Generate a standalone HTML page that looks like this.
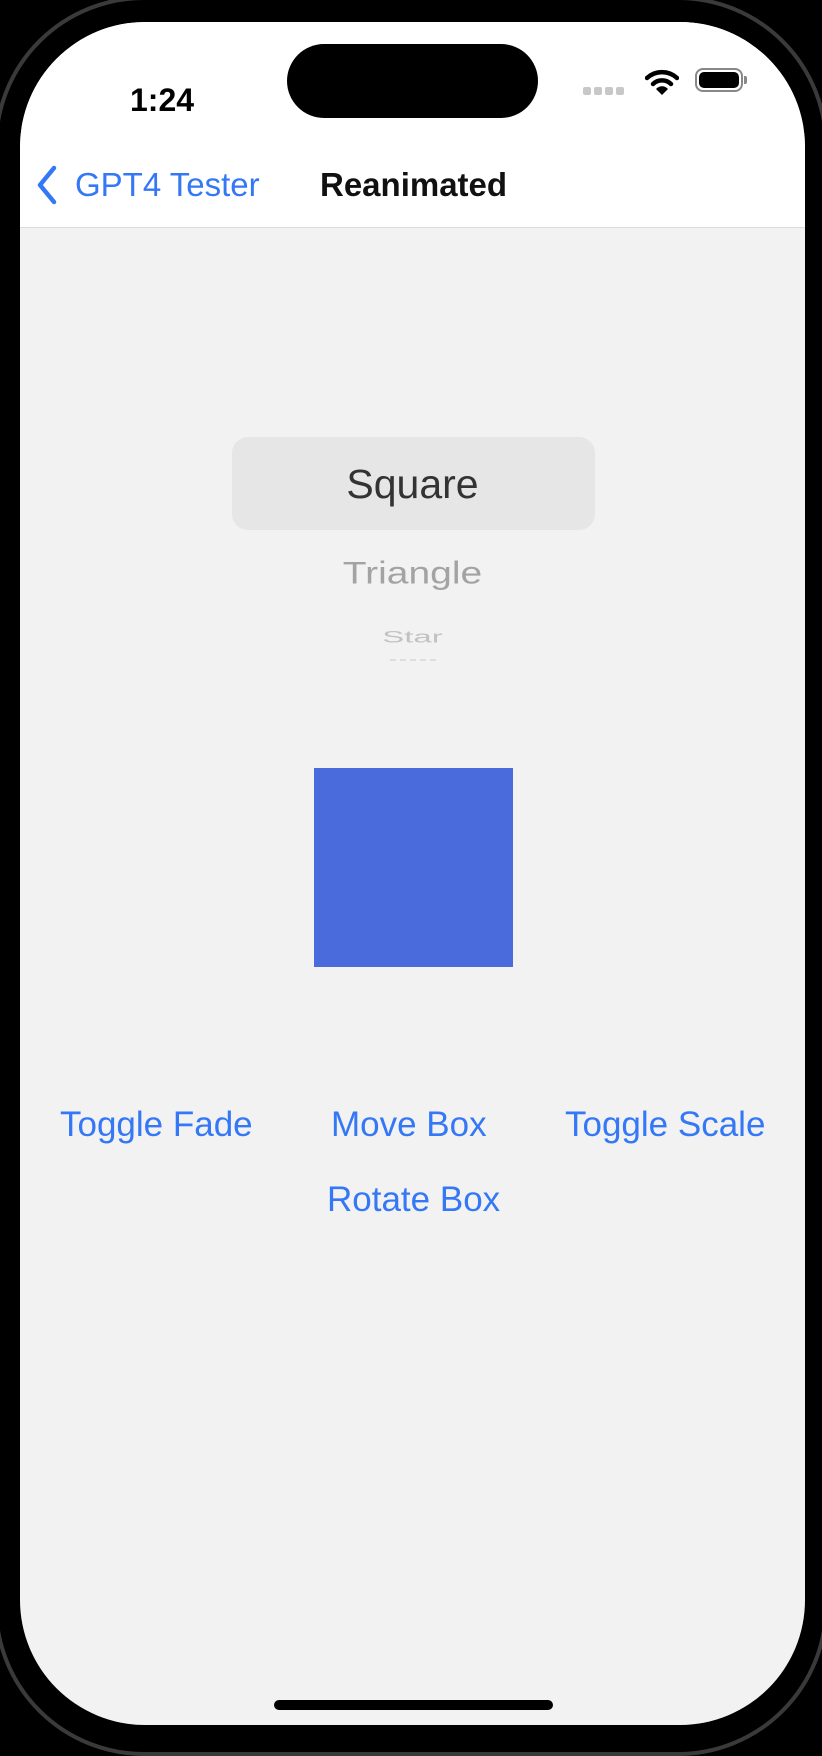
<!DOCTYPE html>
<html><head><meta charset="utf-8"><style>
*{margin:0;padding:0;box-sizing:border-box}
html,body{width:822px;height:1736px;background:#000;overflow:hidden;font-family:"Liberation Sans",sans-serif}
.bezel{position:absolute;left:-6px;top:-4px;width:834px;height:1760px;border-radius:150px;border:4px solid #3a3a3a}
.screen{position:absolute;left:20px;top:22px;width:785px;height:1703px;background:#f2f2f2;border-radius:125px;overflow:hidden}
.t{position:absolute;white-space:nowrap;line-height:1}
</style></head><body>
<div class="bezel"></div>
<div class="screen">
  <div style="position:absolute;left:0;top:0;width:785px;height:206px;background:#fff;border-bottom:1px solid #dcdcdc"></div>
  <div style="position:absolute;left:267px;top:22px;width:251px;height:74px;background:#000;border-radius:37px"></div>
  <div class="t" style="left:110px;top:62px;font-size:32px;font-weight:bold;color:#000">1:24</div>
  <div style="position:absolute;left:563px;top:65px;width:8px;height:8px;border-radius:2px;background:#c8c8c8;box-shadow:11px 0 #c8c8c8,22px 0 #c8c8c8,33px 0 #c8c8c8"></div>
  <svg style="position:absolute;left:625px;top:46px" width="34" height="28" viewBox="0 0 34 28"><path d="M2 10 A22 22 0 0 1 32 10" stroke="#000" stroke-width="4.5" fill="none" stroke-linecap="round"/><path d="M8 16 A13 13 0 0 1 26 16" stroke="#000" stroke-width="4.5" fill="none" stroke-linecap="round"/><path d="M17 27 L11 21 A8 8 0 0 1 23 21 Z" fill="#000"/></svg>
  <div style="position:absolute;left:675px;top:46px;width:48px;height:24px;border:2px solid #888;border-radius:8px;padding:2px"><div style="width:100%;height:100%;background:#000;border-radius:5px"></div></div>
  <div style="position:absolute;left:724px;top:54px;width:3px;height:8px;background:#888;border-radius:0 2px 2px 0"></div>
  <svg style="position:absolute;left:14px;top:142px" width="26" height="42" viewBox="0 0 26 42"><path d="M20 4 L6 21 L20 38" stroke="#3478f6" stroke-width="4.5" fill="none" stroke-linecap="round" stroke-linejoin="round"/></svg>
  <div class="t" style="left:55px;top:146px;font-size:33px;color:#3478f6">GPT4 Tester</div>
  <div class="t" style="left:300px;top:146px;font-size:33px;font-weight:bold;color:#111">Reanimated</div>

  <div style="position:absolute;left:212px;top:415px;width:363px;height:93px;background:#e6e6e6;border-radius:16px"></div>
  <div class="t" style="left:0;width:785px;text-align:center;top:442px;font-size:41px;color:#333">Square</div>
  <div class="t" style="left:0;width:785px;text-align:center;top:532px;font-size:39px;color:#a3a3a3;transform:scaleY(0.8)">Triangle</div>
  <div class="t" style="left:0;width:785px;text-align:center;top:598px;font-size:33px;color:#c2c2c2;transform:scaleY(0.5)">Star</div>
  <div style="position:absolute;left:370px;top:637px;width:48px;height:2px;background:repeating-linear-gradient(90deg,#ddd 0 6px,transparent 6px 10px)"></div>

  <div style="position:absolute;left:294px;top:746px;width:199px;height:199px;background:#4a6bdb"></div>

  <div class="t" style="left:40px;top:1085px;font-size:35px;color:#3478f6">Toggle Fade</div>
  <div class="t" style="left:311px;top:1085px;font-size:35px;color:#3478f6">Move Box</div>
  <div class="t" style="left:545px;top:1085px;font-size:35px;color:#3478f6">Toggle Scale</div>
  <div class="t" style="left:307px;top:1160px;font-size:35px;color:#3478f6">Rotate Box</div>

  <div style="position:absolute;left:254px;top:1678px;width:279px;height:10px;background:#000;border-radius:5px"></div>
</div>
</body></html>
